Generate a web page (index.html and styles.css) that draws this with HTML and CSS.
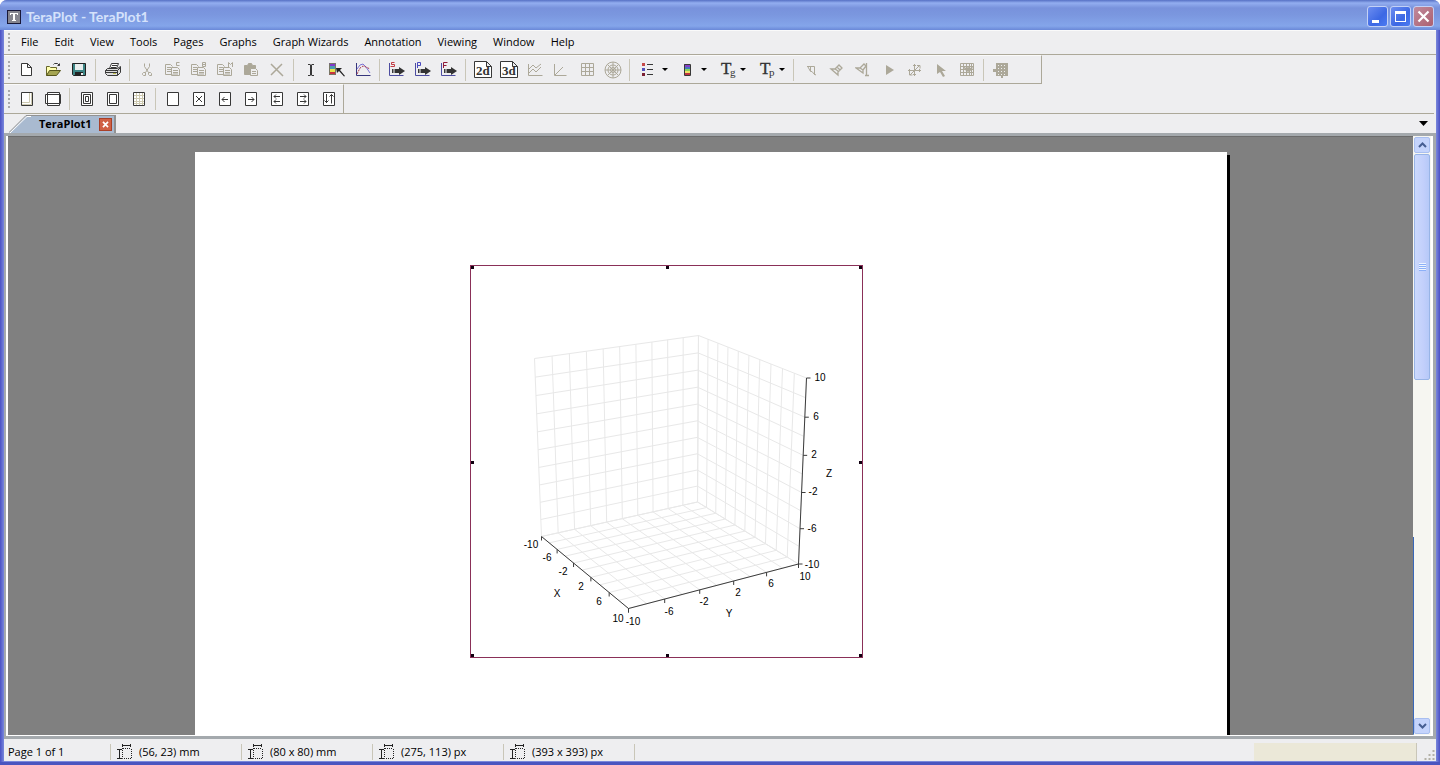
FILE: index.html
```
<!DOCTYPE html>
<html lang="en">
<head>
<meta charset="utf-8">
<title>TeraPlot - TeraPlot1</title>
<link rel="stylesheet" href="styles.css">
</head>
<body>
<div class="window">
  <header class="titlebar">
    <svg class="app-icon" viewBox="0 0 14 14"><rect x=".5" y=".5" width="13" height="13" fill="#85858f" stroke="#181838"/><path d="M3 3h8v2h-1V4H8v6h1v1H5v-1h1V4H4v1H3z" fill="#fff"/></svg>
    <h1 class="title">TeraPlot - TeraPlot1</h1>
    <button class="caption" aria-label="Minimize"><svg viewBox="0 0 21 21"><path d="M5 14h7v3H5z" fill="#fff"/></svg></button>
    <button class="caption" aria-label="Maximize"><svg viewBox="0 0 21 21"><path d="M5 5h11v11H5zM6 8v7h9V8z" fill="#fff" fill-rule="evenodd"/></svg></button>
    <button class="caption close" aria-label="Close"><svg viewBox="0 0 21 21"><path d="M5.500 5.500l10 10M15.500 5.500l-10 10" stroke="#fff" stroke-width="2.200"/></svg></button>
  </header>

  <div class="client">
    <nav class="menubar">
      <span class="grip"></span>
      <button>File</button><button>Edit</button><button>View</button><button>Tools</button><button>Pages</button><button>Graphs</button><button>Graph Wizards</button><button>Annotation</button><button>Viewing</button><button>Window</button><button>Help</button>
    </nav>

    <div class="toolbar main">
      <span class="grip"></span>
      <button aria-label="New"><svg class="i" viewBox="0 0 16 16"><path fill="#fff" d="M2.500 1.500h6l4 4v8h-10zM8.500 1.500v4h4"/></svg></button>
      <button aria-label="Open"><svg class="i" viewBox="0 0 16 16"><path fill="#ffffb0" stroke="#66662a" d="M1.500 13.500v-9h3l1 1h6v2"/><path fill="#a5a552" stroke="#55551c" d="M1.500 13.500l3-5h11l-4 5z"/><path d="M8.500 2.500l1-1h3l2 2M14.500 1.500v2h-2"/></svg></button>
      <button aria-label="Save"><svg class="i" viewBox="0 0 16 16"><path fill="#3c8585" stroke="#222" d="M1.500 1.500h13v12h-12l-1-1z"/><path fill="#e8eeee" stroke="none" d="M4 2h8v6H4z"/><path fill="#222" stroke="none" d="M4 10h8v4H4z"/><path fill="#eee" stroke="none" d="M10 11h2v2h-2z"/></svg></button>
      <span class="sep"></span>
      <button aria-label="Print"><svg class="i" viewBox="0 0 16 16"><path fill="#fff" d="M4.500 6.500l2-5h7l-2 5z"/><path d="M7 3.500h5M6 5.500h5"/><path fill="#ddd" d="M.5 8.500l2-2h10l3-2v6l-3 3h-10l-2-2z"/><path d="M.5 8.500h12v5M12.500 8.500l3-3M1 10.500h11"/><path stroke="#bdbd4c" d="M8 11.500h3"/></svg></button>
      <span class="sep"></span>
      <button disabled aria-label="Cut"><svg class="i" viewBox="0 0 16 16"><path d="M5.500 1.500v3l4 6M10.500 1.500v3l-4 6"/><path d="M4.500 10.500h2v3h-2l-1-1v-1zM9.500 10.500h2l1 1v2h-2l-1-1z"/></svg></button>
      <button disabled aria-label="Copy"><svg class="i" viewBox="0 0 16 16"><path d="M7.500 12.500h-7v-10h5l2 2M2 5.500h4M2 7.500h4M2 9.500h4M6.500 5.500h6l2 2v6h-8zM8 8.500h5M8 10.500h5M8 12h5M14.500.5h-3v3h3"/></svg></button>
      <button disabled aria-label="Copy bitmap"><svg class="i" viewBox="0 0 16 16"><path d="M7.500 12.500h-7v-10h5l2 2M2 5.500h4M2 7.500h4M2 9.500h4M6.500 5.500h6l2 2v6h-8zM8 8.500h5M8 10.500h5M8 12h5M11.500.5v4h3v-4h-3M11.500 2.500h3"/></svg></button>
      <button disabled aria-label="Copy metafile"><svg class="i" viewBox="0 0 16 16"><path d="M7.500 12.500h-7v-10h5l2 2M2 5.500h4M2 7.500h4M2 9.500h4M6.500 5.500h6l2 2v6h-8zM8 8.500h5M8 10.500h5M8 12h5M11.500 5v-4.500l2 2 2-2v4.500"/></svg></button>
      <button disabled aria-label="Paste"><svg class="i" viewBox="0 0 16 16"><path fill="#aca899" d="M1.500 3.500h3l1-2h3l1 2h3v4h-5v5h-6z"/><path fill="#eee" d="M7.500 6.500h5l2 2v5h-7zM9 9.500h4M9 11.500h4"/></svg></button>
      <button disabled aria-label="Delete"><svg class="i" viewBox="0 0 16 16"><path stroke-width="1.500" d="M2 2l12 12M13 2l-11 11"/></svg></button>
      <span class="sep"></span>
      <button aria-label="Text"><svg class="i" viewBox="0 0 16 16"><path d="M5 2.500h2.500M8.500 2.500H11M5 13.500h2.500M8.500 13.500H11"/><path stroke-width="2" d="M8 3v10"/></svg></button>
      <button aria-label="Pick colour"><svg class="i" viewBox="0 0 16 16"><path fill="#8238c8" stroke="none" d="M0 1h7v3H0z"/><path fill="#4a9bb0" stroke="none" d="M0 4h7v3H0z"/><path fill="#e8e24c" stroke="none" d="M0 7h7v3H0z"/><path fill="#c6333c" stroke="none" d="M0 10h7v3H0z"/><path stroke="#776" d="M.5 1.500h6v11h-6z"/><path fill="#222" stroke="none" d="M7 6h6l-2 2 5 6-1 .5L10 9l-2 2z"/></svg></button>
      <button aria-label="Plot"><svg class="i" viewBox="0 0 16 16"><path stroke="#35357c" d="M1.500 1v12.500h14"/><path stroke="#7b72d6" d="M2 7l3-4 3-1 3 3 4 6"/><path stroke="#aa3a50" stroke-dasharray="2 1" d="M2 12l3-6 3-2 3 1 4 2"/></svg></button>
      <span class="sep"></span>
      <button aria-label="Surface wizard"><svg class="i" viewBox="0 0 16 16"><path stroke="#4c4ca0" d="M.5 1v12.500h14"/><path stroke="#c23b42" d="M5.500.5h-3v2h3v2h-4"/><path class="arr" d="M6 7h4V5l6 4-6 4v-2H6z"/><path d="M3.500 7v4M5 7v4"/></svg></button>
      <button aria-label="Plot wizard"><svg class="i" viewBox="0 0 16 16"><path stroke="#4c4ca0" d="M.5 1v12.500h14"/><path stroke="#4a4ac0" d="M2.500 6v-5.500h3v3h-3"/><path class="arr" d="M6 7h4V5l6 4-6 4v-2H6z"/><path d="M3.500 7v4M5 7v4"/></svg></button>
      <button aria-label="Function wizard"><svg class="i" viewBox="0 0 16 16"><path stroke="#4c4ca0" d="M.5 1v12.500h14"/><path stroke="#901838" d="M2.500 6v-5.500h4M2.500 3.500h3"/><path class="arr" d="M6 7h4V5l6 4-6 4v-2H6z"/><path d="M3.500 7v4M5 7v4"/></svg></button>
      <span class="sep"></span>
      <button aria-label="2D graph"><svg class="i wide" viewBox="0 0 18 18"><path fill="#fff" d="M.5 .5h12l5 5v11H.5zM12.500 .5v5h5"/><text x="2" y="14">2d</text></svg></button>
      <button aria-label="3D graph"><svg class="i wide" viewBox="0 0 18 18"><path fill="#fff" d="M.5 .5h12l5 5v11H.5zM12.500 .5v5h5"/><text x="2" y="14">3d</text></svg></button>
      <button disabled aria-label="Line graph"><svg class="i" viewBox="0 0 16 16"><path d="M1.500 2v11.500h14M2 11l4-4 3 3 5-5M2 7l4-4 3 3 5-4"/></svg></button>
      <button disabled aria-label="Axes"><svg class="i" viewBox="0 0 16 16"><path d="M1.500 2v11.500h12M2 13l8-8"/></svg></button>
      <button disabled aria-label="Grid"><svg class="i" viewBox="0 0 16 16"><path d="M2.500 1.500h12v12h-12zM6.500 1.500v12M10.500 1.500v12M2.500 5.500h12M2.500 9.500h12"/></svg></button>
      <button disabled aria-label="Polar grid"><svg class="i wide" viewBox="0 0 18 18"><circle cx="9" cy="9" r="8"/><circle cx="9" cy="9" r="5"/><circle cx="9" cy="9" r="2.500"/><path d="M1 9h16M9 1v16M3.500 3.500l11 11M14.500 3.500l-11 11"/></svg></button>
      <span class="sep"></span>
      <button class="split" aria-label="Legend"><svg class="i" viewBox="0 0 16 16"><path fill="#c64848" stroke="none" d="M3 1h3v3H3z"/><path fill="#5151bb" stroke="none" d="M3 6h3v3H3z"/><path fill="#7b2033" stroke="none" d="M3 11h3v3H3z"/><path d="M8 2.500h6M8 7.500h6M8 12.500h6"/></svg><i class="drop"></i></button>
      <button class="split" aria-label="Colour scale"><svg class="i" viewBox="0 0 16 16"><path fill="#8540c9" stroke="none" d="M6 2h6v3H6z"/><path fill="#4779bc" stroke="none" d="M6 5h6v2H6z"/><path fill="#84d05c" stroke="none" d="M6 7h6v2H6z"/><path fill="#f0e068" stroke="none" d="M6 9h6v2H6z"/><path fill="#bd3540" stroke="none" d="M6 11h6v2H6z"/><path d="M6.500 2.500h6v11h-6z"/></svg><i class="drop"></i></button>
      <button class="split" aria-label="Graph text"><svg class="i wide" viewBox="0 0 18 18"><text class="big" x="5" y="13">T</text><text class="sub" x="14" y="15">g</text></svg><i class="drop"></i></button>
      <button class="split" aria-label="Page text"><svg class="i wide" viewBox="0 0 18 18"><text class="big" x="5" y="13">T</text><text class="sub" x="14" y="15">p</text></svg><i class="drop"></i></button>
      <span class="sep"></span>
      <button disabled aria-label="Slice"><svg class="i" viewBox="0 0 16 16"><path d="M4 4.500h7.500v8L9 9.500H7.500L5 5M7.500 5v4M11 12l2 1"/></svg></button>
      <button disabled aria-label="Light"><svg class="i" viewBox="0 0 16 16"><path stroke-width="1.300" d="M2 7l7 6V9L6 7zM6 7l4-4 3 3-4 4M8 5l3 3"/></svg></button>
      <button disabled aria-label="Fixed light"><svg class="i" viewBox="0 0 16 16"><path stroke-width="1.300" d="M1 6l7 5V8L5 6zM5 6l4-4 2 2-3 4M11.500 1v12.500M10 13.500h4"/></svg></button>
      <button disabled aria-label="Play"><svg class="i" viewBox="0 0 16 16"><path fill="#aca899" stroke="none" d="M5 3l8 5-8 5z"/></svg></button>
      <button disabled aria-label="Rotate"><svg class="i" viewBox="0 0 16 16"><path d="M7.500 2v12M1 8.500h13M3 13l9.500-9.500M6 3.500h3M2.500 7v3M12.500 7v3M10 3.500h3v3M2.500 10v3h3M6 12.500h3"/></svg></button>
      <button disabled aria-label="Select"><svg class="i" viewBox="0 0 16 16"><path fill="#aca899" stroke="none" d="M4 2v10l3-2 3 5 2-1-3-5h4z"/></svg></button>
      <button disabled aria-label="Mesh"><svg class="i" viewBox="0 0 16 16"><path d="M1.500 1.500h13v12H1.500zM4.500 1.500v12M7.500 1.500v12M10.500 1.500v12M12.500 1.500v12M1.500 4.500h13M1.500 7.500h13M1.500 10.500h13"/><path fill="#aca899" stroke="none" d="M4 4l3 2 2-1 3 1 2-2-1 4-4 2-3-2z"/></svg></button>
      <span class="sep"></span>
      <button disabled aria-label="Data grid"><svg class="i" viewBox="0 0 16 16"><path fill="#aca899" stroke="none" d="M3 1h12v13h-5v2H8v-2H3v-4H0V7h3z"/><path stroke="#eee" stroke-dasharray="1 2" d="M5 3.500h9M5 6.500h9M5 9.500h9M5 12.500h9"/></svg></button>
    </div>

    <div class="toolbar pages">
      <span class="grip"></span>
      <button aria-label="Page shadow"><svg class="i" viewBox="0 0 16 16"><path fill="#fff" d="M2.500 1.500h11v13h-11z"/><path stroke="#cdc9b0" d="M10.500 2v9.500H3M12.500 2v11.500H3"/></svg></button>
      <button aria-label="Page margins"><svg class="i wide" viewBox="0 0 18 18"><path fill="#fff" d="M3.500 2.500h12v13h-12zM1.500 4.500h15v9h-15z"/><path d="M3.500 4v10M15.500 4v10"/></svg></button>
      <span class="sep"></span>
      <button aria-label="Fit graph"><svg class="i" viewBox="0 0 16 16"><path fill="#fff" d="M2.500 1.500h11v13h-11zM4.500 3.500h7v9h-7zM6.500 5.500h3v5h-3z"/></svg></button>
      <button aria-label="Fit page"><svg class="i" viewBox="0 0 16 16"><path fill="#fff" d="M2.500 1.500h11v13h-11zM4.500 3.500h7v9h-7z"/></svg></button>
      <button aria-label="Page grid"><svg class="i" viewBox="0 0 16 16"><path fill="#fff" d="M2.500 1.500h11v13h-11z"/><path stroke="#cdc9b0" d="M5.500 2v12M8.500 2v12M11.500 2v12M3 4.500h10M3 7.500h10M3 10.500h10M3 12.500h10"/></svg></button>
      <span class="sep"></span>
      <button aria-label="Add page"><svg class="i" viewBox="0 0 16 16"><path fill="#fff" d="M2.500 1.500h11v13h-11z"/></svg></button>
      <button aria-label="Delete page"><svg class="i" viewBox="0 0 16 16"><path fill="#fff" d="M2.500 1.500h11v13h-11zM5 5l6 6M11 5l-6 6"/></svg></button>
      <button aria-label="Previous page"><svg class="i" viewBox="0 0 16 16"><path fill="#fff" d="M2.500 1.500h11v13h-11z"/><path d="M11 8.500H5M7.500 6l-2.500 2.500L7.500 11"/></svg></button>
      <button aria-label="Next page"><svg class="i" viewBox="0 0 16 16"><path fill="#fff" d="M2.500 1.500h11v13h-11z"/><path d="M5 8.500h6M8.500 6l2.500 2.500L8.500 11"/></svg></button>
      <button aria-label="Move page back"><svg class="i" viewBox="0 0 16 16"><path fill="#fff" d="M2.500 1.500h11v13h-11z"/><path d="M11 5.500H5M7 3.500l-2 2 2 2M11 10.500H5M7 8.500l-2 2 2 2"/></svg></button>
      <button aria-label="Move page forward"><svg class="i" viewBox="0 0 16 16"><path fill="#fff" d="M2.500 1.500h11v13h-11z"/><path d="M5 5.500h6M9 3.500l2 2-2 2M5 10.500h6M9 8.500l2 2-2 2"/></svg></button>
      <button aria-label="Sort pages"><svg class="i" viewBox="0 0 16 16"><path fill="#fff" d="M2.500 1.500h11v13h-11z"/><path d="M5.500 3v9M3.500 9.500l2 2 2-2M10.500 12.500v-9M8.500 5.500l2-2 2 2"/></svg></button>
    </div>

    <div class="tabs">
      <div class="tab">
        <svg class="slope" viewBox="0 0 22 18"><path fill="#a9bad0" d="M0 18L17 1h5v17z"/><path fill="none" stroke="#fff" d="M1 18L18 1.500h4"/><path fill="none" stroke="#929292" d="M0 17.500L17 .5h5"/></svg>
        <button class="tab-name">TeraPlot1</button>
        <button class="tab-close" aria-label="Close tab"><svg viewBox="0 0 13 13"><path d="M3.500 3.500l6 6M9.500 3.500l-6 6" stroke="#fff" stroke-width="2"/></svg></button>
      </div>
      <button class="tab-list" aria-label="Tab list"><svg viewBox="0 0 9 5"><path d="M0 0h9L4.500 5z"/></svg></button>
    </div>

    <main class="workspace">
      <div class="canvas">
        <div class="sheet">
          <div class="graph">
            <svg id="plot" viewBox="0 0 393 393"></svg>
            <span class="handle nw"></span><span class="handle n"></span><span class="handle ne"></span>
            <span class="handle w"></span><span class="handle e"></span>
            <span class="handle sw"></span><span class="handle s"></span><span class="handle se"></span>
          </div>
        </div>
      </div>
      <div class="scrollbar">
        <button class="arrow" aria-label="Scroll up"><svg viewBox="0 0 9 6"><path d="M1 5l3.500-3.500L8 5"/></svg></button>
        <div class="track"><div class="thumb"><span class="ridges"></span></div></div>
        <button class="arrow" aria-label="Scroll down"><svg viewBox="0 0 9 6"><path d="M1 1l3.500 3.500L8 1"/></svg></button>
      </div>
    </main>

    <footer class="status">
      <span class="cell first">Page 1 of 1</span>
      <span class="cell"><svg class="measure" viewBox="0 0 15 15"><path d="M5 1.500h9M5.500 0v3M13.500 0v3M2.500 5v9M0 5.500h5M0 14.500h5"/><path stroke-dasharray="1 1" d="M5.500 4v10.500h9V4"/><path stroke-dasharray="1 1" d="M6 4.500h8"/></svg>(56, 23) mm</span>
      <span class="cell"><svg class="measure" viewBox="0 0 15 15"><path d="M5 1.500h9M5.500 0v3M13.500 0v3M2.500 5v9M0 5.500h5M0 14.500h5"/><path stroke-dasharray="1 1" d="M5.500 4v10.500h9V4"/><path stroke-dasharray="1 1" d="M6 4.500h8"/></svg>(80 x 80) mm</span>
      <span class="cell"><svg class="measure" viewBox="0 0 15 15"><path d="M5 1.500h9M5.500 0v3M13.500 0v3M2.500 5v9M0 5.500h5M0 14.500h5"/><path stroke-dasharray="1 1" d="M5.500 4v10.500h9V4"/><path stroke-dasharray="1 1" d="M6 4.500h8"/></svg>(275, 113) px</span>
      <span class="cell"><svg class="measure" viewBox="0 0 15 15"><path d="M5 1.500h9M5.500 0v3M13.500 0v3M2.500 5v9M0 5.500h5M0 14.500h5"/><path stroke-dasharray="1 1" d="M5.500 4v10.500h9V4"/><path stroke-dasharray="1 1" d="M6 4.500h8"/></svg>(393 x 393) px</span>
      <span class="panel"></span>
      <svg class="sizer" viewBox="0 0 18 20"><path fill="#b4b2a8" d="M15 8h2v2h-2zM11 12h2v2h-2zM15 12h2v2h-2zM7 16h2v2H7zM11 16h2v2h-2zM15 16h2v2h-2z"/></svg>
    </footer>
  </div>
</div>
<script src="plot.js"></script>
</body>
</html>
```

FILE: styles.css
```
* { box-sizing: border-box; }
body {
  margin: 0;
  font: 11px/16px "Open Sans", "Noto Sans", sans-serif;
  color: #000;
  background: #fff;
}
button {
  border: 0;
  padding: 0;
  margin: 0;
  background: none;
  font: inherit;
  color: inherit;
}
svg { display: block; flex: none; }

.window {
  display: flex;
  flex-direction: column;
  height: 100vh;
  padding: 0 4px 4px;
  border-radius: 7px 7px 0 0;
  overflow: hidden;
  background: linear-gradient(90deg, #4a50c4, #7a88dc 4px, #7a88dc calc(100% - 4px), #4a50c4);
  box-shadow: inset 0 -3px #4a55c0;
}
.titlebar {
  display: flex;
  align-items: center;
  gap: 2px;
  height: 30px;
  margin: 0 -4px;
  padding: 3px 6px 0 7px;
  background: linear-gradient(#5670c4, #93aef0 3px, #7892dc 8px, #7b97df 15px, #84a5ea 26px, #6a88d8);
}
.app-icon { width: 14px; height: 14px; }
.title {
  flex: 1;
  margin: 0 0 0 3px;
  font: bold 14px/18px Lato, sans-serif;
  color: #d5e2fb;
}
.caption {
  width: 21px;
  height: 21px;
  border: 1px solid #c3d1f6;
  border-radius: 3px;
  background: linear-gradient(135deg, #6c8df0, #3c68e4 60%, #4b7bf2);
}
.caption svg { width: 21px; height: 21px; margin: -1px; }
.caption.close { background: linear-gradient(135deg, #c08a9c, #ac6070); }

.client {
  flex: 1;
  min-height: 0;
  display: flex;
  flex-direction: column;
  background: #eeeef0;
}
.grip {
  flex: none;
  width: 10px;
  height: 18px;
  background: radial-gradient(circle, #aaa 1px, transparent 1px) 3px 3px / 4px 4px repeat-y;
}
.menubar {
  display: flex;
  align-items: center;
  height: 25px;
  padding-bottom: 2px;
  border-top: 1px solid #fafafa;
  border-bottom: 1px solid #aca899;
}
.menubar button { padding: 0 9px 0 7px; }

.toolbar {
  display: flex;
  align-items: center;
  align-self: flex-start;
  height: 29px;
  border-top: 1px solid #fafafa;
  border-right: 1px solid #aca899;
  border-bottom: 1px solid #aca899;
}
.toolbar.main { padding-right: 27px; }
.toolbar.pages { padding: 0 1px 1px 0; border-bottom: 0; }
.toolbar button {
  display: flex;
  align-items: center;
  justify-content: center;
  width: 26px;
  height: 24px;
}
.toolbar .split { width: 39px; padding-left: 5px; justify-content: flex-start; }
.split .wide { margin: 0 -1px; overflow: visible; }
.drop {
  margin-left: 7px;
  border: 3px solid transparent;
  border-top-color: #000;
  border-bottom: 0;
}
.sep {
  width: 8px;
  height: 22px;
  background: linear-gradient(#c9c6b8, #c9c6b8) 3px 0 / 1px 100% no-repeat;
}
.i { width: 16px; height: 16px; fill: none; stroke: #383838; }
.i.wide { width: 18px; height: 18px; }
button:disabled .i { stroke: #aca899; }
.i .arr { fill: #333; stroke: none; }
.i text {
  font: bold 13px "Liberation Serif", serif;
  fill: #333;
  stroke: none;
}
.i .big { font: 17px "Liberation Serif", serif; stroke: #333; stroke-width: .4; }
.i .sub { font: 11px "Liberation Serif", serif; }

.tabs {
  display: flex;
  justify-content: space-between;
  align-items: flex-end;
  height: 20px;
  margin-right: 2px;
  border-top: 1px solid #aca899;
}
.tabs .tab { display: flex; height: 18px; padding-left: 5px; }
.slope { width: 22px; height: 18px; }
.tab-name {
  padding: 0 7px 1px 8px;
  border-top: 1px solid #929292;
  background: #a9bad0;
  font-weight: bold;
}
.tab-close {
  width: 17px;
  border: 1px solid #929292;
  border-width: 1px 2px 0 0;
  background: #a9bad0;
}
.tab-close svg { width: 13px; height: 13px; background: #d06045; border: 1px solid #a84028; }
.tab-list { padding: 0 6px 7px; }
.tab-list svg { width: 9px; height: 5px; }

.workspace {
  flex: 1;
  min-height: 0;
  display: flex;
  border: solid #a4a9ad;
  border-width: 3px 3px 3px 2px;
  background: #fff;
  padding: 0 2px 1px;
}
.canvas {
  flex: 1;
  overflow: hidden;
  padding: 15px 0 0 1px;
  border-top: 1px solid #6c6c6c;
  background: #808080;
}
.sheet {
  position: relative;
  width: 1032px;
  height: 1460px;
  margin: 0 auto;
  background: #fff;
  box-shadow: 3px 3px #000;
}
.graph {
  position: absolute;
  left: 275px;
  top: 113px;
  width: 393px;
  height: 393px;
  border: 1px solid #8a3058;
}
.graph svg { width: 393px; height: 393px; margin: -1px; }
.handle { position: absolute; width: 3px; height: 3px; background: #100010; }
.nw, .w, .sw { left: 0; }
.n, .s { left: 195px; }
.ne, .e, .se { right: 0; }
.nw, .n, .ne { top: 0; }
.w, .e { top: 195px; }
.sw, .s, .se { bottom: 0; }

.grid { fill: none; stroke: #e8e8e8; }
.axis { fill: none; stroke: #3c3c3c; }
.label { font: 10px "Liberation Sans", sans-serif; text-anchor: middle; }

.scrollbar {
  display: flex;
  flex-direction: column;
  width: 18px;
  padding: 1px;
  background: linear-gradient(#3a68b8, #3a68b8) 0 100% / 1px 33% no-repeat, #f6f6f1;
}
.arrow {
  display: flex;
  align-items: center;
  justify-content: center;
  height: 16px;
  border: 1px solid #a9bff0;
  border-radius: 2px;
  background: #c5d4fc;
}
.arrow svg { width: 9px; height: 6px; fill: none; stroke: #465e92; stroke-width: 2; }
.track { flex: 1; }
.thumb {
  display: flex;
  align-items: center;
  justify-content: center;
  height: 40%;
  margin-top: 1px;
  border: 1px solid #98b4e6;
  border-radius: 2px;
  background: linear-gradient(90deg, #cbd9fd, #c2cffb 60%, #b6c9f8);
}
.ridges {
  width: 7px;
  height: 8px;
  background: repeating-linear-gradient(#eef4fe 0 1px, #8cb0f8 1px 2px);
}

.status {
  display: flex;
  align-items: center;
  height: 22px;
  padding-top: 3px;
}
.cell {
  display: flex;
  align-items: center;
  gap: 7px;
  width: 131px;
  height: 16px;
  padding-left: 6px;
  border-right: 1px solid #c9c6b8;
}
.cell.first { width: 107px; padding-left: 4px; }
.measure { width: 15px; height: 15px; fill: none; stroke: #222; }
.panel {
  width: 163px;
  height: 18px;
  margin-left: auto;
  border-right: 1px solid #c9c6b8;
  background: #ebe8d8;
}
.sizer { width: 19px; height: 20px; }
```

FILE: plot.js
```
const svg = document.getElementById('plot');

// Projected corners of the plot box.
const leftTop = [64.5, 93.5], backTop = [228.5, 70.5], rightTop = [336.5, 113];
const leftBase = [71.5, 271.5], backBase = [227.5, 237], rightBase = [328.5, 299];
const frontBase = [158.5, 343.5];

// Maps the unit square onto a quadrilateral in perspective.
function project([x0, y0], [x1, y1], [x2, y2], [x3, y3]) {
  const dx1 = x1 - x2, dx2 = x3 - x2, sx = x0 - x1 + x2 - x3;
  const dy1 = y1 - y2, dy2 = y3 - y2, sy = y0 - y1 + y2 - y3;
  const d = dx1 * dy2 - dx2 * dy1;
  const g = (sx * dy2 - dx2 * sy) / d, h = (dx1 * sy - sx * dy1) / d;
  return (u, v) => {
    const w = g * u + h * v + 1;
    return [
      ((x1 - x0 + g * x1) * u + (x3 - x0 + h * x3) * v + x0) / w,
      ((y1 - y0 + g * y1) * u + (y3 - y0 + h * y3) * v + y0) / w
    ];
  };
}

function add(name, attrs, text) {
  const el = document.createElementNS('http://www.w3.org/2000/svg', name);
  for (const key in attrs) el.setAttribute(key, attrs[key]);
  if (text) el.textContent = text;
  svg.appendChild(el);
}

const leftWall = project(leftTop, backTop, backBase, leftBase);
const rightWall = project(backTop, rightTop, rightBase, backBase);
const floor = project(leftBase, backBase, rightBase, frontBase);

for (const face of [leftWall, rightWall, floor]) {
  let d = '';
  for (let i = 0; i <= 10; i++) {
    const t = i / 10;
    d += `M${face(t, 0)}L${face(t, 1)}M${face(0, t)}L${face(1, t)}`;
  }
  add('path', { class: 'grid', d });
}

add('path', { class: 'axis', d: `M${leftBase}L${frontBase}L${rightBase}L${rightTop}` });
let ticks = '';
for (let i = 0; i <= 5; i++) {
  const t = i / 5;
  ticks += `M${floor(0, t)}v4M${floor(t, 1)}v4M${rightWall(1, t)}h4`;
}
add('path', { class: 'axis', d: ticks });

const labels = [
  ['-10', 61, 283], ['-6', 77, 296], ['-2', 93, 310], ['2', 111, 325], ['6', 129, 340], ['10', 148, 357],
  ['-10', 163, 360], ['-6', 199, 350], ['-2', 234, 340], ['2', 268, 331], ['6', 301, 322], ['10', 335, 315],
  ['10', 350, 116], ['6', 346, 155], ['2', 344, 193], ['-2', 343, 230], ['-6', 342, 267], ['-10', 342, 303],
  ['X', 87, 332], ['Y', 259, 352], ['Z', 359, 212]
];
for (const [text, x, y] of labels) add('text', { class: 'label', x, y }, text);
```
